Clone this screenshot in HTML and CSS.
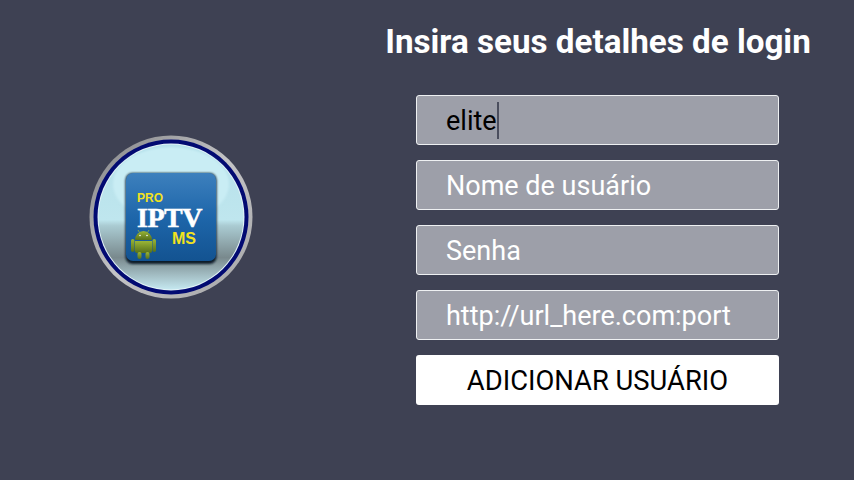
FILE: index.html
```html
<!DOCTYPE html>
<html lang="en">

<head>
    <meta charset="UTF-8" />
    <title>Adicionar usuário</title>
    <link rel="stylesheet" href="styles.css">
</head>

<body>
    <div class="page">
        <div class="logo-side">
            <svg class="logo" width="166" height="166" viewBox="0 0 166 166">
                <defs>
                    <linearGradient id="ringGray" x1="0" y1="0" x2="1" y2="1">
                        <stop offset="0" stop-color="#7f8083" />
                        <stop offset="0.5" stop-color="#c4c4c6" />
                        <stop offset="1" stop-color="#a4a4a6" />
                    </linearGradient>
                    <linearGradient id="disc" x1="0" y1="0" x2="0" y2="1">
                        <stop offset="0" stop-color="#b5e0ea" />
                        <stop offset="0.52" stop-color="#bfe6ee" />
                        <stop offset="0.56" stop-color="#aacbd2" />
                        <stop offset="0.78" stop-color="#79898d" />
                        <stop offset="1" stop-color="#c5e8f0" />
                    </linearGradient>
                    <linearGradient id="tile" x1="0" y1="0" x2="0" y2="1">
                        <stop offset="0" stop-color="#3d80bd" />
                        <stop offset="0.5" stop-color="#1e66aa" />
                        <stop offset="1" stop-color="#135391" />
                    </linearGradient>
                    <linearGradient id="droid" x1="0" y1="0" x2="0" y2="1">
                        <stop offset="0" stop-color="#9ab536" />
                        <stop offset="1" stop-color="#56701a" />
                    </linearGradient>
                    <filter id="soft" x="-10%" y="-10%" width="120%" height="120%">
                        <feGaussianBlur stdDeviation="1" />
                    </filter>
                </defs>
                <circle cx="83" cy="83" r="81.5" fill="url(#ringGray)" />
                <circle cx="83" cy="83" r="77.5" fill="#020a72" />
                <circle cx="83" cy="83" r="73.5" fill="#e4f4f8" />
                <circle cx="83" cy="83" r="72.5" fill="url(#disc)" />
                <ellipse cx="83" cy="50" rx="58" ry="37" fill="#c9edf4" filter="url(#soft)" />
                <rect x="37.500" y="39" width="91" height="91" rx="7" fill="#0c1c2c" filter="url(#soft)" />
                <rect x="38" y="39" width="90" height="88" rx="7" fill="url(#tile)" />
                <text class="logo-small" x="49" y="68">PRO</text>
                <text class="logo-big" x="49" y="93">IPTV</text>
                <text class="logo-small logo-ms" x="84" y="110">MS</text>
                <g fill="url(#droid)">
                    <path d="M47 106a8.500 9 0 0 1 17 0z" />
                    <path d="M47 107h17v10a2 2 0 0 1-2 2h-13a2 2 0 0 1-2-2z" />
                    <rect x="43" y="105" width="3.500" height="13" rx="1.750" />
                    <rect x="64.500" y="105" width="3.500" height="13" rx="1.750" />
                    <rect x="49.500" y="118" width="4" height="7" rx="2" />
                    <rect x="57.500" y="118" width="4" height="7" rx="2" />
                </g>
                <path d="M50 96l1.500 2.500M61 96l-1.500 2.500" stroke="#9ab536" stroke-width="0.800" />
                <circle cx="52" cy="101.500" r="0.800" fill="#fff" />
                <circle cx="59" cy="101.500" r="0.800" fill="#fff" />
            </svg>
        </div>

        <div class="form-side">
            <h1 class="title">Insira seus detalhes de login</h1>
            <div class="fields">
                <div class="field field-filled"><span>elite</span><i class="caret"></i></div>
                <div class="field">Nome de usuário</div>
                <div class="field">Senha</div>
                <div class="field">http://url_here.com:port</div>
                <div class="add-btn">ADICIONAR USUÁRIO</div>
            </div>
        </div>
    </div>
</body>

</html>
```

FILE: styles.css
```css
* {
    box-sizing: border-box;
}

html,
body {
    margin: 0;
    height: 100%;
}

body {
    font-family: Roboto, sans-serif;
    background: #3e4153;
    overflow: hidden;
}

.page {
    display: flex;
    height: 480px;
}

.logo-side {
    width: 341px;
    display: flex;
    align-items: center;
    justify-content: center;
    padding-bottom: 46px;
}

.logo {
    display: block;
}

.logo-small {
    font-family: "Liberation Sans", sans-serif;
    font-weight: bold;
    font-size: 12px;
    fill: #f2e21e;
}

.logo-ms {
    font-size: 16px;
}

.logo-big {
    font-family: "Liberation Serif", serif;
    font-weight: bold;
    font-size: 28px;
    letter-spacing: -0.5px;
    fill: #fff;
    stroke: #fff;
    stroke-width: 0.5px;
}

.form-side {
    width: 513px;
    padding-top: 23px;
}

.title {
    margin: 0;
    width: 514px;
    text-align: center;
    font-size: 33.2px;
    line-height: 38px;
    font-weight: 700;
    color: #fff;
}

.fields {
    margin: 34px 0 0 75px;
    width: 363px;
    display: flex;
    flex-direction: column;
    gap: 15px;
}

.field {
    height: 50px;
    display: flex;
    align-items: center;
    padding: 2px 0 0 29px;
    background: #9d9fa9;
    border: 1px solid #eef0f2;
    border-radius: 3px;
    font-size: 27px;
    color: #fff;
}

.field-filled {
    color: #000;
}

.caret {
    width: 2px;
    height: 37px;
    margin-top: -2px;
    background: #4b4e5e;
}

.add-btn {
    height: 50px;
    display: flex;
    align-items: center;
    justify-content: center;
    padding-top: 2px;
    background: #fff;
    border-radius: 3px;
    font-size: 27.4px;
    color: #000;
}
```
